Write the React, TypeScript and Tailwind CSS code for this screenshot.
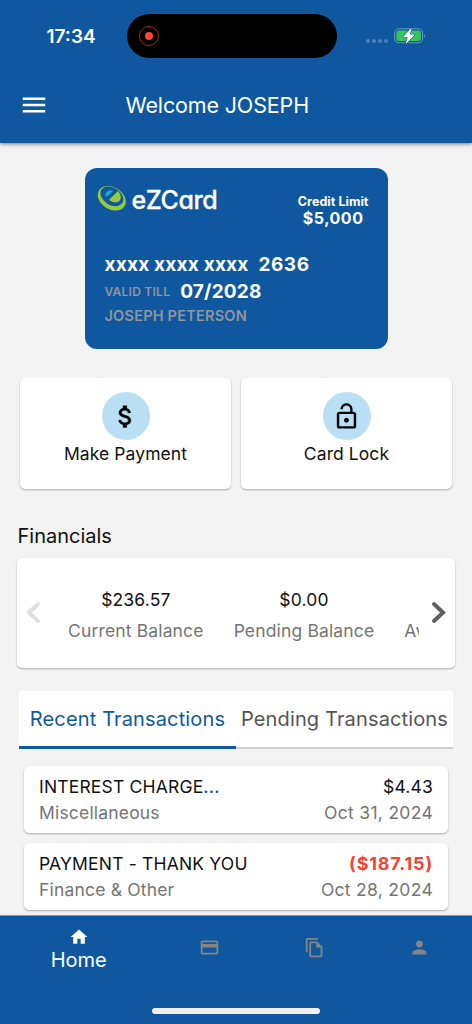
import {
  MdCreditCard,
  MdHome,
  MdLockOpen,
  MdMenu,
  MdOutlineFileCopy,
  MdPerson,
} from "react-icons/md";

interface Transaction {
  title: string;
  truncated?: boolean;
  category: string;
  amount: string;
  credit?: boolean;
  date: string;
}

const transactions: Transaction[] = [
  {
    title: "INTEREST CHARGE",
    truncated: true,
    category: "Miscellaneous",
    amount: "$4.43",
    date: "Oct 31, 2024",
  },
  {
    title: "PAYMENT - THANK YOU",
    category: "Finance & Other",
    amount: "($187.15)",
    credit: true,
    date: "Oct 28, 2024",
  },
];

function StatusBar() {
  return (
    <div className="flex h-[72px] items-center">
      <div className="w-[127px] pt-px pl-[46.5px] text-[19px] leading-6 font-semibold">
        17:34
      </div>
      <div className="flex h-11 w-[210px] items-center rounded-full bg-black pl-3">
        <div className="flex h-5 w-5 items-center justify-center rounded-full border border-[#a32b22]">
          <div className="h-2 w-2 rounded-full bg-[#ff4336]" />
        </div>
      </div>
      <div className="flex items-center pl-[29px]">
        <div className="mt-[9px] mr-[6px] flex gap-[2px]">
          {[0, 1, 2, 3].map((dot) => (
            <div key={dot} className="h-1 w-1 rounded-full bg-[#4b82b9]" />
          ))}
        </div>
        <svg width="32" height="16" viewBox="0 0 32 16" fill="none">
          <rect x="0.6" y="0.8" width="28" height="14" rx="4.6" stroke="#6696c5" strokeWidth="1.1" />
          <path d="M30.2 6v3.8c1.2-.5 1.2-3.3 0-3.8Z" fill="#6696c5" />
          <rect x="2.3" y="2.5" width="24.6" height="10.6" rx="3" fill="#34c759" />
          <path
            d="M16.8.6 9.4 8.5c-.3.4-.1.8.4.8h4l-1.9 5.4c-.1.5.4.8.8.4L20 7.4c.3-.4.1-.8-.4-.8h-3.9L17.6 1c.1-.5-.4-.8-.8-.4Z"
            fill="#fff"
            stroke="#0f58a0"
            strokeWidth="1.2"
            paintOrder="stroke"
          />
        </svg>
      </div>
    </div>
  );
}

function Logo() {
  return (
    <div className="flex items-start">
      <svg width="30" height="28" viewBox="0 0 30 28" fill="none">
        <ellipse cx="14.8" cy="14.3" rx="15" ry="11" transform="rotate(32 14.8 14.3)" fill="#97c93d" />
        <ellipse cx="14.9" cy="12.3" rx="12.4" ry="8.7" transform="rotate(32 14.9 12.3)" fill="#0f58a0" />
        <path d="M17.500 2.300c4.300 1.500 8.600 5 10.200 9.200" stroke="#0f58a0" strokeWidth=".8" />
        <path d="M8.600 12.300c-1.300-4 2.400-6.700 7.700-5.600l-6 5.600H8.600Z" fill="#1ba9e1" />
        <path d="m12 15.800 9-8.800c3 3.200 3.600 7.500 1.700 9.800-2.500 2.600-7.500 2-10.700-1Z" fill="#97c93d" />
      </svg>
      <span className="mt-[4px] ml-[5px] text-[25px] leading-6 font-medium tracking-[-0.4px] [-webkit-text-stroke:0.3px_white] [font-feature-settings:'cv11']">
        eZCard
      </span>
    </div>
  );
}

function CreditCard() {
  return (
    <div className="mx-auto mt-[25px] h-[181px] w-[303px] rounded-[12px] bg-[#0f58a0] text-white">
      <div className="flex h-[84px] justify-between pr-[19px] pl-3">
        <div className="pt-4">
          <Logo />
        </div>
        <div className="pt-[24.5px] text-center font-bold">
          <div className="text-[12.5px] leading-[17px] tracking-[0.05px]">Credit Limit</div>
          <div className="text-[16px] leading-[16px] tracking-[0.5px]">$5,000</div>
        </div>
      </div>
      <div className="pl-5 font-bold">
        <div className="flex gap-[10px] pt-px text-[19px] leading-6">
          <span className="tracking-[0.2px]">xxxx xxxx xxxx</span>
          <span className="tracking-[0.5px]">2636</span>
        </div>
        <div className="mt-[2px] flex items-center text-[19px] leading-6 tracking-[0.2px]">
          <span className="mr-[10px] pt-px text-[12px] font-semibold tracking-[0.25px] text-[#919599]">
            VALID TILL
          </span>
          <span>07/2028</span>
        </div>
        <div className="text-[14.500px] leading-6 font-semibold tracking-[0.22px] text-[#919599]">
          JOSEPH PETERSON
        </div>
      </div>
    </div>
  );
}

function DollarIcon() {
  return (
    <svg width="29" height="29" viewBox="0 0 24 24">
      <path
        d="M11.8 10.9c-2.270-.59-3-1.200-3-2.150 0-1.090 1.010-1.850 2.700-1.850 1.780 0 2.440.85 2.500 2.100h2.210c-.07-1.720-1.120-3.300-3.210-3.810V3h-3v2.160c-1.940.42-3.500 1.680-3.500 3.610 0 2.310 1.910 3.460 4.700 4.130 2.500.6 3 1.480 3 2.410 0 .69-.49 1.790-2.700 1.790-2.060 0-2.870-.92-2.980-2.100h-2.200c.12 2.190 1.760 3.420 3.680 3.830V21h3v-2.150c1.950-.37 3.500-1.500 3.500-3.550 0-2.840-2.430-3.810-4.700-4.400z"
        fill="black"
        stroke="black"
        strokeWidth="0.3"
      />
    </svg>
  );
}

function ActionTile({ label, icon }: { label: string; icon: React.ReactNode }) {
  return (
    <button
      type="button"
      className="flex h-[111px] flex-1 flex-col items-center rounded-[5px] bg-white pt-[14px] shadow-[0_1px_2px_rgba(0,0,0,0.3)]"
    >
      <span className="flex h-12 w-12 items-center justify-center rounded-full bg-[#b9dff5] text-black">
        {icon}
      </span>
      <span className="mt-px text-[17.5px] leading-[25px] tracking-[0.08px]">{label}</span>
    </button>
  );
}

function Financials() {
  return (
    <section className="px-[17px]">
      <h2 className="mt-[35px] pl-[0.5px] text-[20px] leading-6">Financials</h2>
      <div className="mt-[10px] flex h-[110px] items-center rounded-[5px] bg-white pb-px shadow-[0_1px_2px_rgba(0,0,0,0.3)]">
        <svg className="ml-[9px] shrink-0" width="15" height="23" viewBox="0 0 15 23" fill="none">
          <path d="M12 3 3 11.500 12 20" stroke="#dedede" strokeWidth="4" strokeLinecap="round" />
        </svg>
        <div className="flex w-[378px] gap-[30px] overflow-hidden pt-[4px] pl-[27px] text-center text-[17.5px] leading-[31px] tracking-[0.15px] whitespace-nowrap">
          <div className="shrink-0">
            <div>$236.57</div>
            <div className="text-[#757575]">Current Balance</div>
          </div>
          <div className="shrink-0">
            <div>$0.00</div>
            <div className="text-[#757575]">Pending Balance</div>
          </div>
          <div className="shrink-0 self-end text-[#757575]">Available</div>
        </div>
        <svg className="ml-[12px] shrink-0" width="15" height="23" viewBox="0 0 15 23" fill="none">
          <path d="M3 3 12 11.500 3 20" stroke="#5f5f5f" strokeWidth="4" strokeLinecap="round" />
        </svg>
      </div>
    </section>
  );
}

function TransactionRow({ item }: { item: Transaction }) {
  return (
    <div className="flex h-[67px] justify-between rounded-[5px] bg-white px-[15px] pt-[8px] text-[17.5px] leading-[26px] tracking-[0.18px] shadow-[0_1px_2px_rgba(0,0,0,0.3)]">
      <div>
        <div>
          {item.title}
          {item.truncated && <span className="font-medium text-[#0f58a0]">...</span>}
        </div>
        <div className="text-[#757575]">{item.category}</div>
      </div>
      <div className="text-right">
        <div className={item.credit ? "text-[18px] font-bold tracking-[0.8px] text-[#f44336]" : ""}>
          {item.amount}
        </div>
        <div className="tracking-[0.3px] text-[#757575]">{item.date}</div>
      </div>
    </div>
  );
}

export default function App() {
  return (
    <div className="flex h-[1024px] w-[472px] flex-col overflow-hidden bg-[#f3f3f3] font-[Inter,sans-serif] text-[#111]">
      <header className="relative h-[143px] shrink-0 bg-[#0f58a0] text-white shadow-[0_1px_4px_rgba(0,0,0,0.5)]">
        <StatusBar />
        <div className="flex h-[66px] items-center">
          <MdMenu size={30} className="ml-[19px]" />
          <h1 className="ml-[76.5px] text-[21.5px] tracking-[-0.15px]">Welcome JOSEPH</h1>
        </div>
      </header>

      <main className="min-h-0 flex-1 overflow-hidden">
        <CreditCard />

        <div className="mt-[29px] flex gap-[10px] px-5">
          <ActionTile label="Make Payment" icon={<DollarIcon />} />
          <ActionTile label="Card Lock" icon={<MdLockOpen size={29} />} />
        </div>

        <Financials />

        <div className="mx-[19px] mt-[23px] flex h-[58px] bg-white text-[20px] leading-[56px] tracking-[0.14px] whitespace-nowrap">
          <div className="w-[217px] shrink-0 border-b-[3px] border-[#0f58a0] text-center text-[#0f58a0]">
            Recent Transactions
          </div>
          <div className="w-[217px] shrink-0 border-b-2 border-[#cfcfcf] text-center text-[#555]">
            Pending Transactions
          </div>
        </div>

        <div className="mt-[17px] flex flex-col gap-[10px] px-6">
          {transactions.map((item) => (
            <TransactionRow key={item.date} item={item} />
          ))}
        </div>
      </main>

      <nav className="flex h-[109px] shrink-0 flex-col border-t border-[#6e9bc4] bg-[#0f58a0]">
        <div className="flex h-[63px] items-center text-[#858585]">
          <div className="flex flex-[1.5] flex-col items-center pt-[5px] text-white">
            <MdHome size={20} />
            <span className="text-[20px] leading-[26px] tracking-[-0.1px]">Home</span>
          </div>
          <div className="flex flex-1 justify-center">
            <MdCreditCard size={21} />
          </div>
          <div className="flex flex-1 justify-center">
            <MdOutlineFileCopy size={21} />
          </div>
          <div className="flex flex-1 justify-center">
            <MdPerson size={21} />
          </div>
        </div>
        <div className="mx-auto mt-[29px] h-[6px] w-[168px] rounded-full bg-[#efefef]" />
      </nav>
    </div>
  );
}
